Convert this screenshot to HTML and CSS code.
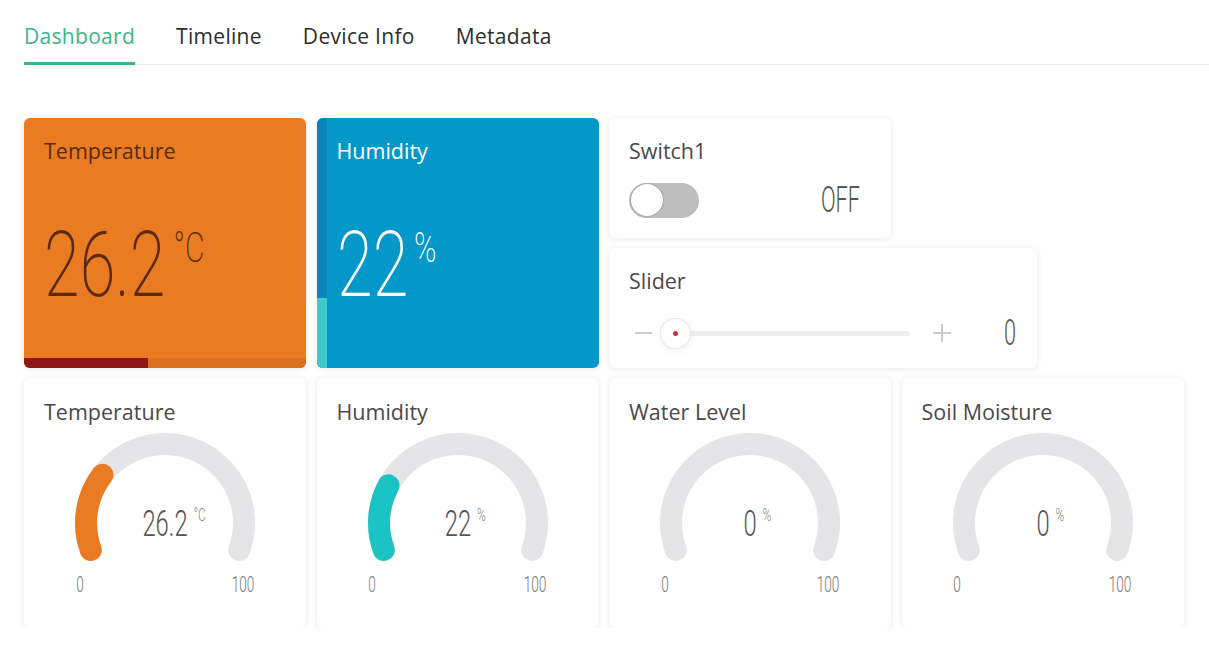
FILE: index.html
```html
<!DOCTYPE html>
<html lang="en">
<head>
<meta charset="utf-8">
<title>Dashboard</title>
<link rel="stylesheet" href="styles.css">
</head>
<body>
<div class="page">
  <nav class="tabs">
    <a class="tab active">Dashboard</a>
    <a class="tab">Timeline</a>
    <a class="tab">Device Info</a>
    <a class="tab">Metadata</a>
  </nav>

  <main class="grid">
    <section class="card tile tile-temp">
      <h3 class="title">Temperature</h3>
      <div class="tile-val">
        <span class="tile-num">26.2</span><span class="tile-unit">°C</span>
      </div>
      <div class="tile-bar"><div class="tile-bar-fill" style="width:124px"></div></div>
    </section>

    <section class="card tile tile-hum">
      <div class="hum-stripe"><div class="hum-stripe-fill" style="height:70px"></div></div>
      <h3 class="title">Humidity</h3>
      <div class="tile-val">
        <span class="tile-num">22</span><span class="tile-unit">%</span>
      </div>
    </section>

    <section class="card switch-card">
      <h3 class="title">Switch1</h3>
      <div class="switch-row">
        <div class="toggle"><div class="knob"></div></div>
        <span class="thin off">OFF</span>
      </div>
    </section>

    <section class="card slider-card">
      <h3 class="title">Slider</h3>
      <div class="slider-row">
        <svg class="pm" width="17" height="12" viewBox="0 0 17 12"><line x1="0" y1="6" x2="17" y2="6"/></svg>
        <div class="track"><div class="thumb"><span class="dot"></span></div></div>
        <svg class="pm plus" width="18" height="18" viewBox="0 0 18 18"><line x1="0" y1="9" x2="18" y2="9"/><line x1="9" y1="0" x2="9" y2="18"/></svg>
        <span class="thin slider-val">0</span>
      </div>
    </section>

    <section class="card gauge-card">
      <h3 class="title">Temperature</h3>
      <div class="gauge">
        <svg width="282" height="204" viewBox="0 0 282 204">
          <path class="arc-bg" d="M 66.8 126 A 79 79 0 1 1 215.2 126"/>
          <path class="arc-val orange" d="M 66.8 126 A 79 79 0 0 1 78.4 50.8"/>
        </svg>
        <div class="g-val"><span class="g-num">26.2<span class="g-unit">°C</span></span></div>
        <span class="g-min">0</span><span class="g-max">100</span>
      </div>
    </section>

    <section class="card gauge-card">
      <h3 class="title">Humidity</h3>
      <div class="gauge">
        <svg width="282" height="204" viewBox="0 0 282 204">
          <path class="arc-bg" d="M 66.8 126 A 79 79 0 1 1 215.2 126"/>
          <path class="arc-val teal" d="M 66.8 126 A 79 79 0 0 1 71.5 61.4"/>
        </svg>
        <div class="g-val"><span class="g-num">22<span class="g-unit">%</span></span></div>
        <span class="g-min">0</span><span class="g-max">100</span>
      </div>
    </section>

    <section class="card gauge-card">
      <h3 class="title">Water Level</h3>
      <div class="gauge">
        <svg width="282" height="204" viewBox="0 0 282 204">
          <path class="arc-bg" d="M 66.8 126 A 79 79 0 1 1 215.2 126"/>
        </svg>
        <div class="g-val"><span class="g-num">0<span class="g-unit">%</span></span></div>
        <span class="g-min">0</span><span class="g-max">100</span>
      </div>
    </section>

    <section class="card gauge-card">
      <h3 class="title">Soil Moisture</h3>
      <div class="gauge">
        <svg width="282" height="204" viewBox="0 0 282 204">
          <path class="arc-bg" d="M 66.8 126 A 79 79 0 1 1 215.2 126"/>
        </svg>
        <div class="g-val"><span class="g-num">0<span class="g-unit">%</span></span></div>
        <span class="g-min">0</span><span class="g-max">100</span>
      </div>
    </section>
  </main>
</div>
</body>
</html>
```

FILE: styles.css
```css
* { box-sizing: border-box; }
html, body { margin: 0; padding: 0; background: #ffffff; }
body {
  font-family: "Open Sans", "Noto Sans", sans-serif;
  color: #333;
}
.page { padding-left: 24px; }

.tabs {
  display: flex;
  gap: 41px;
  border-bottom: 1px solid #ebebeb;
}
.tab {
  font-size: 21px;
  letter-spacing: 0.3px;
  line-height: 28px;
  padding: 22px 0 12px;
  border-bottom: 3px solid transparent;
  margin-bottom: -1px;
  color: #2e2e2e;
  cursor: pointer;
}
.tab.active { color: #3bb68a; border-bottom-color: #3bb68a; }

.grid {
  margin-top: 53px;
  display: grid;
  grid-template-columns: repeat(8, 135.75px);
  grid-template-rows: repeat(4, 120px);
  column-gap: 10.5px;
  row-gap: 10px;
}
.card {
  position: relative;
  background: #fff;
  border-radius: 6px;
  box-shadow: 0 1px 6px rgba(0, 0, 0, 0.09);
  overflow: hidden;
}
.title {
  margin: 0;
  padding: 21px 20px 0;
  font-size: 21.5px;
  line-height: 24px;
  font-weight: 400;
  color: #4a4a4a;
}
.gauge-card .title { padding-top: 22px; }

.thin {
  font-family: "Roboto", "Liberation Sans", sans-serif;
  font-weight: 300;
}

/* Big value tiles */
.tile { grid-row: span 2; grid-column: span 2; }
.tile-temp { background: #e97b22; }
.tile-temp .title { color: #5a2a0b; }
.tile-hum { background: #0497c9; }
.tile-hum .title { color: #fff; }

.tile-val {
  display: flex;
  align-items: flex-start;
  margin: 58px 0 0 20px;
  transform: scaleX(0.72);
  transform-origin: left top;
  font-family: "Roboto", "Liberation Sans", sans-serif;
  font-weight: 200;
}
.tile-num { font-size: 90px; line-height: 90px; }
.tile-unit { font-size: 42px; line-height: 42px; margin: 6px 0 0 11px; }
.tile-hum .tile-unit { margin-left: 8px; }
.tile-temp .tile-val { color: #5a2a0b; }
.tile-hum .tile-val { color: #fff; }

.tile-bar {
  position: absolute;
  left: 0; right: 0; bottom: 0;
  height: 10px;
  background: #d9711f;
}
.tile-bar-fill { height: 100%; background: #8c1818; }

.hum-stripe {
  position: absolute;
  left: 0; top: 0; bottom: 0;
  width: 10px;
  background: #0a87b8;
  display: flex;
  flex-direction: column;
  justify-content: flex-end;
}
.hum-stripe-fill { background: #41cacb; }

/* Switch */
.switch-card { grid-column: 5 / span 2; grid-row: 1; }
.switch-row {
  display: flex;
  align-items: center;
  justify-content: space-between;
  padding: 19px 31px 0 20px;
}
.toggle {
  width: 70px;
  height: 35px;
  border-radius: 18px;
  background: #bebebe;
  padding: 1.5px;
}
.knob {
  width: 32px;
  height: 32px;
  border-radius: 50%;
  background: #fff;
  box-shadow: 0 0 2px rgba(0, 0, 0, 0.35);
}
.off {
  font-size: 36px;
  line-height: 36px;
  color: #555;
  transform: scaleX(0.6);
  transform-origin: right center;
}

/* Slider */
.slider-card { grid-column: 5 / span 3; grid-row: 2; }
.slider-row {
  display: flex;
  align-items: center;
  padding: 22px 21px 0 26px;
  height: 58px;
}
.pm { stroke: #bdbdbd; stroke-width: 1.5; flex: none; }
.track {
  position: relative;
  margin-left: 9px;
  width: 249px;
  height: 5px;
  border-radius: 3px;
  background: #eeeeee;
}
.thumb {
  position: absolute;
  left: 0;
  top: 50%;
  width: 29px;
  height: 29px;
  margin-top: -14.5px;
  border-radius: 50%;
  background: #fff;
  box-shadow: 0 0 0 1px #e8e8e8, 0 2px 8px rgba(0, 0, 0, 0.08);
  display: flex;
  align-items: center;
  justify-content: center;
}
.dot { width: 5px; height: 5px; border-radius: 50%; background: #d3323b; }
.plus { margin-left: 23px; }
.slider-val {
  margin-left: auto;
  font-size: 36px;
  line-height: 36px;
  color: #555;
  transform: scaleX(0.6);
  transform-origin: right center;
}

/* Gauges */
.gauge-card { grid-row: 3 / span 2; grid-column: span 2; }
.gauge { position: relative; height: 203px; }
.gauge svg { display: block; }
.arc-bg { fill: none; stroke: #e5e5e7; stroke-width: 22; stroke-linecap: round; }
.arc-val { fill: none; stroke-width: 22; stroke-linecap: round; }
.arc-val.orange { stroke: #e97b22; }
.arc-val.teal { stroke: #1cc3c4; }

.g-val {
  position: absolute;
  left: 0; right: 0;
  top: 82px;
  text-align: center;
  transform: scaleX(0.66);
  font-family: "Roboto", "Liberation Sans", sans-serif;
  font-weight: 300;
  color: #555;
}
.g-num { position: relative; display: inline-block; font-size: 36px; line-height: 36px; }
.g-unit {
  position: absolute;
  left: 100%;
  top: 0;
  margin-left: 9px;
  font-size: 18px;
  line-height: 18px;
  color: #888;
}
.g-min, .g-max {
  position: absolute;
  top: 150px;
  font-family: "Roboto", "Liberation Sans", sans-serif;
  font-weight: 300;
  font-size: 22px;
  line-height: 22px;
  color: #777;
  transform: translateX(-50%) scaleX(0.62);
}
.g-min { left: 55.5px; }
.g-max { left: 218.5px; }
```
